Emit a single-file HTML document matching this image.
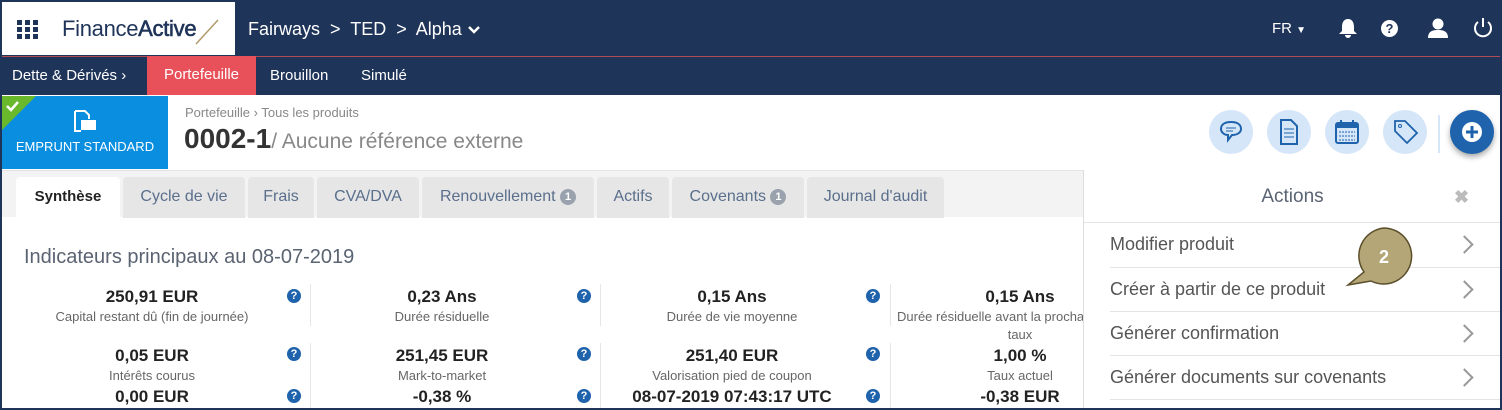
<!DOCTYPE html>
<html style="width:1502px;height:410px;overflow:hidden"><head><meta charset="utf-8"><style>
*{box-sizing:border-box;margin:0;padding:0}
body{width:1502px;height:410px;overflow:hidden;background:#1f3459;font-family:"Liberation Sans",Arial,sans-serif;position:relative}
.abs{position:absolute}
.top{left:2px;top:2px;width:1498px;height:53px;background:#1f3459}
.logo{left:2px;top:2px;width:233px;height:53px;background:#fff}
.nav2{left:2px;top:56px;width:1498px;height:39px;background:#1f3459;border-top:1px solid #b04a55}
.w{color:#fff}
.main{left:2px;top:95px;width:1498px;height:313px;background:#fff}
.tabs{left:2px;top:170px;width:1081px;height:47px;background:#f3f3f3;border-top:1px solid #e4e4e4}
.tab{position:absolute;top:6px;height:41px;background:#e6e6e6;border-radius:4px 4px 0 0;color:#5a6f8c;font-size:16px;text-align:center;line-height:40px}
.badge{display:inline-block;width:16px;height:16px;border-radius:50%;background:#9aa3ad;color:#fff;font-size:11px;line-height:16px;vertical-align:1px;font-weight:bold}
.v{position:absolute;font-weight:bold;font-size:17px;line-height:18px;color:#222;text-align:center;width:290px}
.l{position:absolute;font-size:13px;line-height:15px;color:#666;text-align:center;width:290px}
.q{position:absolute;width:14px;height:14px;border-radius:50%;background:#1f63ad;color:#fff;font-size:11px;font-weight:bold;text-align:center;line-height:14px}
.div{position:absolute;width:1px;background:#e6e6e6}
.panel{left:1083px;top:170px;width:417px;height:238px;background:#fff;border-left:1px solid #ddd;overflow:hidden}
.row{position:absolute;left:26px;width:391px;height:44px;border-top:1px solid #e4e4e4;font-size:18px;color:#555;line-height:42px}
.chev{position:absolute;right:30px;top:15px;width:13px;height:13px;border-right:2px solid #999;border-top:2px solid #999;transform:rotate(45deg)}
.circ{position:absolute;top:110px;width:44px;height:44px;border-radius:50%;background:#d5e6f8}
</style></head><body>
<div class="abs top"></div>
<div class="abs logo">
<svg class="abs" style="left:15px;top:18px" width="22" height="20"><g fill="#1f3459"><rect x="0" y="0" width="5" height="5"/><rect x="8" y="0" width="5" height="5"/><rect x="16" y="0" width="5" height="5"/><rect x="0" y="7" width="5" height="5"/><rect x="8" y="7" width="5" height="5"/><rect x="16" y="7" width="5" height="5"/><rect x="0" y="14" width="5" height="5"/><rect x="8" y="14" width="5" height="5"/><rect x="16" y="14" width="5" height="5"/></g></svg>
<div class="abs" style="left:60px;top:14px;font-size:22px;color:#1f3459;letter-spacing:-0.3px">Finance<b style="font-weight:normal;color:#1f3459;-webkit-text-stroke:0.6px #1f3459">Active</b></div>
<svg class="abs" style="left:192px;top:16px" width="26" height="28"><line x1="2" y1="26" x2="24" y2="2" stroke="#b09a6a" stroke-width="1.5"/></svg>
</div>
<div class="abs w" style="left:248px;top:19px;font-size:18px">Fairways &nbsp;&gt;&nbsp; TED &nbsp;&gt;&nbsp; Alpha <svg width="14" height="10"><path d="M2 2 L7 7 L12 2" stroke="#fff" stroke-width="2.5" fill="none"/></svg></div>
<div class="abs w" style="left:1272px;top:20px;font-size:15px">FR <span style="font-size:10px">▼</span></div>
<svg class="abs" style="left:1338px;top:18px" width="20" height="20"><path d="M10 1 C5 1 4 6 4 9 L4 13 L1 16 L19 16 L16 13 L16 9 C16 6 15 1 10 1Z M7 17 A3 3 0 0 0 13 17Z" fill="#fff"/></svg>
<div class="abs" style="left:1381px;top:20px;width:17px;height:17px;border-radius:50%;background:#fff;color:#1f3459;font-size:13px;font-weight:bold;text-align:center;line-height:17px">?</div>
<svg class="abs" style="left:1427px;top:17px" width="22" height="22"><circle cx="11" cy="7" r="5.5" fill="#fff"/><path d="M1 21 C1 14 6 13 11 13 C16 13 21 14 21 21Z" fill="#fff"/></svg>
<svg class="abs" style="left:1472px;top:17px" width="22" height="22"><path d="M6 5 A8 8 0 1 0 16 5" stroke="#fff" stroke-width="2" fill="none"/><line x1="11" y1="1" x2="11" y2="10" stroke="#fff" stroke-width="2"/></svg>
<div class="abs nav2"></div>
<div class="abs w" style="left:12px;top:67px;font-size:15px">Dette &amp; Dérivés ›</div>
<div class="abs" style="left:147px;top:56px;width:109px;height:39px;background:#e8505a;color:#fff;font-size:15px;text-align:center;line-height:38px">Portefeuille</div>
<div class="abs w" style="left:270px;top:67px;font-size:15px">Brouillon</div>
<div class="abs w" style="left:361px;top:67px;font-size:15px">Simulé</div>
<div class="abs main"></div>
<div class="abs" style="left:2px;top:96px;width:166px;height:73px;background:#0a8ee0"></div>
<svg class="abs" style="left:2px;top:96px" width="36" height="36"><path d="M0 0 L34 0 L0 34Z" fill="#6ab82c"/><path d="M5 10 L9 14 L16 6" stroke="#fff" stroke-width="2.5" fill="none"/></svg>
<svg class="abs" style="left:73px;top:109px" width="26" height="24"><path d="M2 2 L12 2 L16 6 L16 10 M2 2 L2 22 L8 22" stroke="#fff" stroke-width="2" fill="none"/><rect x="8" y="11" width="15" height="10" fill="#fff"/></svg>
<div class="abs w" style="left:2px;top:139px;width:166px;text-align:center;font-size:13px">EMPRUNT STANDARD</div>
<div class="abs" style="left:185px;top:105px;font-size:13px;color:#888">Portefeuille › Tous les produits</div>
<div class="abs" style="left:184px;top:123px;font-size:28px;color:#333"><b>0002-1</b><span style="font-size:21px;color:#888">/ Aucune référence externe</span></div>
<div class="circ" style="left:1209px"></div><div class="circ" style="left:1267px"></div><div class="circ" style="left:1325px"></div><div class="circ" style="left:1383px"></div>
<svg class="abs" style="left:1218px;top:118px" width="26" height="28"><path d="M13 4 C6 4 3 7 3 11 C3 14 6 17 10 17 L10 22 L14 17 C20 17 23 14 23 11 C23 7 20 4 13 4Z" stroke="#1f63ad" stroke-width="2" fill="none"/><line x1="8" y1="10" x2="18" y2="10" stroke="#1f63ad"/><line x1="8" y1="13" x2="15" y2="13" stroke="#1f63ad"/></svg>
<svg class="abs" style="left:1279px;top:119px" width="20" height="26"><path d="M2 1 L12 1 L18 7 L18 25 L2 25Z" stroke="#1f63ad" stroke-width="2" fill="none"/><g stroke="#1f63ad"><line x1="5" y1="10" x2="15" y2="10"/><line x1="5" y1="14" x2="15" y2="14"/><line x1="5" y1="18" x2="15" y2="18"/></g></svg>
<svg class="abs" style="left:1335px;top:119px" width="24" height="26"><rect x="1" y="4" width="22" height="20" rx="2" stroke="#1f63ad" stroke-width="2" fill="none"/><rect x="1" y="4" width="22" height="5" fill="#1f63ad"/><line x1="6" y1="1" x2="6" y2="6" stroke="#1f63ad" stroke-width="2"/><line x1="18" y1="1" x2="18" y2="6" stroke="#1f63ad" stroke-width="2"/><g stroke="#1f63ad" stroke-dasharray="2 1"><line x1="4" y1="13" x2="20" y2="13"/><line x1="4" y1="17" x2="20" y2="17"/><line x1="4" y1="21" x2="20" y2="21"/></g></svg>
<svg class="abs" style="left:1393px;top:119px" width="26" height="26"><path d="M2 2 L12 2 L24 14 L14 24 L2 12Z" stroke="#1f63ad" stroke-width="1.8" fill="none"/><circle cx="7" cy="7" r="1.5" stroke="#1f63ad" fill="none"/></svg>
<div class="abs" style="left:1438px;top:115px;width:2px;height:38px;background:#d5e6f8"></div>
<div class="abs" style="left:1450px;top:110px;width:44px;height:44px;border-radius:50%;background:#1f63ad;box-shadow:0 3px 6px rgba(0,0,0,.35)"></div>
<svg class="abs" style="left:1461px;top:121px" width="22" height="22"><circle cx="11" cy="11" r="10" fill="#fff"/><path d="M11 5 V17 M5 11 H17" stroke="#1f63ad" stroke-width="3"/></svg>
<div class="abs tabs">
<div class="tab" style="left:14px;width:104px;background:#fff;color:#222;font-weight:bold;font-size:15px">Synthèse</div>
<div class="tab" style="left:121px;width:122px">Cycle de vie</div>
<div class="tab" style="left:246px;width:66px">Frais</div>
<div class="tab" style="left:315px;width:102px">CVA/DVA</div>
<div class="tab" style="left:420px;width:172px">Renouvellement <span class="badge">1</span></div>
<div class="tab" style="left:595px;width:72px">Actifs</div>
<div class="tab" style="left:670px;width:132px">Covenants <span class="badge">1</span></div>
<div class="tab" style="left:805px;width:137px">Journal d'audit</div>
</div>
<div class="abs" style="left:24px;top:246px;font-size:20px;color:#5a6372">Indicateurs principaux au 08-07-2019</div>
<div class="div" style="left:310px;top:284px;height:42px"></div><div class="div" style="left:600px;top:284px;height:42px"></div><div class="div" style="left:890px;top:284px;height:42px"></div>
<div class="div" style="left:310px;top:343px;height:65px"></div><div class="div" style="left:600px;top:343px;height:65px"></div><div class="div" style="left:890px;top:343px;height:65px"></div>
<div class="v" style="left:7px;top:288px">250,91 EUR</div><div class="l" style="left:7px;top:309px">Capital restant dû (fin de journée)</div>
<div class="v" style="left:297px;top:288px">0,23 Ans</div><div class="l" style="left:297px;top:309px">Durée résiduelle</div>
<div class="v" style="left:587px;top:288px">0,15 Ans</div><div class="l" style="left:587px;top:309px">Durée de vie moyenne</div>
<div class="v" style="left:875px;top:288px">0,15 Ans</div><div class="l" style="left:875px;top:309px;width:208px;white-space:nowrap;overflow:hidden;text-align:left;padding-left:22px">Durée résiduelle avant la prochaine</div><div class="l" style="left:875px;top:327px">taux</div>
<div class="v" style="left:7px;top:347px">0,05 EUR</div><div class="l" style="left:7px;top:368px">Intérêts courus</div>
<div class="v" style="left:297px;top:347px">251,45 EUR</div><div class="l" style="left:297px;top:368px">Mark-to-market</div>
<div class="v" style="left:587px;top:347px">251,40 EUR</div><div class="l" style="left:587px;top:368px">Valorisation pied de coupon</div>
<div class="v" style="left:875px;top:347px">1,00 %</div><div class="l" style="left:875px;top:368px">Taux actuel</div>
<div class="v" style="left:7px;top:388px">0,00 EUR</div><div class="v" style="left:297px;top:388px">-0,38 %</div><div class="v" style="left:587px;top:388px">08-07-2019 07:43:17 UTC</div><div class="v" style="left:875px;top:388px">-0,38 EUR</div>
<div class="q" style="left:287px;top:289px">?</div><div class="q" style="left:577px;top:289px">?</div><div class="q" style="left:866px;top:289px">?</div>
<div class="q" style="left:287px;top:347px">?</div><div class="q" style="left:577px;top:347px">?</div><div class="q" style="left:866px;top:347px">?</div>
<div class="q" style="left:287px;top:389px">?</div><div class="q" style="left:577px;top:389px">?</div><div class="q" style="left:866px;top:389px">?</div>
<div class="abs panel">
<div class="abs" style="left:0;top:16px;width:417px;text-align:center;font-size:19px;color:#5a6372">Actions</div>
<div class="abs" style="left:370px;top:17px;font-size:18px;color:#bbb;font-weight:bold">✖</div>
<div class="abs" style="left:0;top:52px;width:417px;height:1px;background:#e4e4e4"></div>
<div class="row" style="top:53px;border-top:none">Modifier produit<div class="chev"></div></div>
<div class="row" style="top:97px">Créer à partir de ce produit<div class="chev"></div></div>
<div class="row" style="top:141px">Générer confirmation<div class="chev"></div></div>
<div class="row" style="top:185px">Générer documents sur covenants<div class="chev"></div></div>
<div class="abs" style="left:26px;top:229px;width:391px;height:1px;background:#e4e4e4"></div>
</div>
<svg class="abs" style="left:1340px;top:226px" width="80" height="64"><path d="M44 2 A28 28 0 1 1 31 55 L8 59 L24 46 A28 28 0 0 1 44 2Z" fill="#b4a677" stroke="#5b4f2c" stroke-width="1.5"/><text x="44" y="37" text-anchor="middle" font-family="Liberation Sans" font-weight="bold" font-size="18" fill="#fff">2</text></svg>
</body></html>
